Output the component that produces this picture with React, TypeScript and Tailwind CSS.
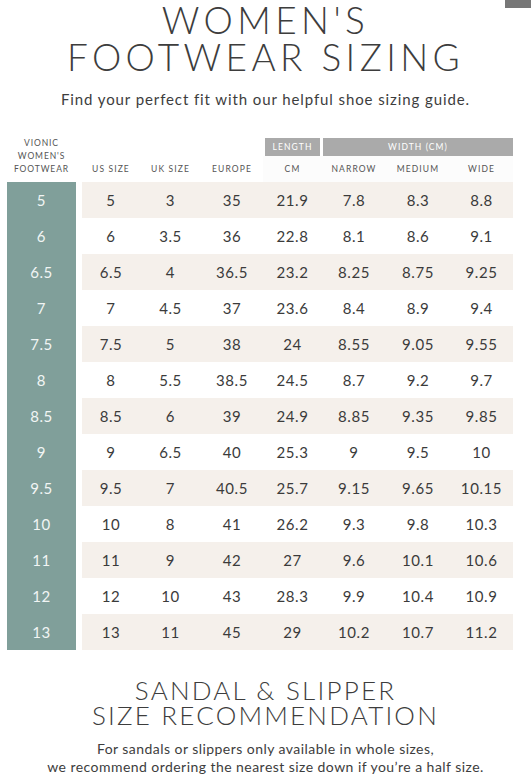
const rows = [
  ["5", "5", "3", "35", "21.9", "7.8", "8.3", "8.8"],
  ["6", "6", "3.5", "36", "22.8", "8.1", "8.6", "9.1"],
  ["6.5", "6.5", "4", "36.5", "23.2", "8.25", "8.75", "9.25"],
  ["7", "7", "4.5", "37", "23.6", "8.4", "8.9", "9.4"],
  ["7.5", "7.5", "5", "38", "24", "8.55", "9.05", "9.55"],
  ["8", "8", "5.5", "38.5", "24.5", "8.7", "9.2", "9.7"],
  ["8.5", "8.5", "6", "39", "24.9", "8.85", "9.35", "9.85"],
  ["9", "9", "6.5", "40", "25.3", "9", "9.5", "10"],
  ["9.5", "9.5", "7", "40.5", "25.7", "9.15", "9.65", "10.15"],
  ["10", "10", "8", "41", "26.2", "9.3", "9.8", "10.3"],
  ["11", "11", "9", "42", "27", "9.6", "10.1", "10.6"],
  ["12", "12", "10", "43", "28.3", "9.9", "10.4", "10.9"],
  ["13", "13", "11", "45", "29", "10.2", "10.7", "11.2"],
];

const widths = ["w-[58px]", "w-[61px]", "w-[62px]", "w-[59px]", "w-[64px]", "w-[64px]", "w-[63px]"];
const labels = ["US SIZE", "UK SIZE", "EUROPE", "CM", "NARROW", "MEDIUM", "WIDE"];

export default function App() {
  return (
    <div className="relative w-[531px] h-[780px] overflow-hidden bg-white text-[#3b3b3b] font-['Lato',sans-serif]">
      {/* stray scrollbar-ish block in the corner */}
      <div className="absolute right-0 top-0 w-[26px] h-[8px] bg-[#777]" />

      {/* ── Title ── */}
      <h1 className="pt-[1px] text-center text-[37px] leading-[37px] font-light tracking-[4.4px] text-[#3d3d3d]">
        WOMEN'S
        <br />
        FOOTWEAR SIZING
      </h1>
      <p className="mt-[15px] text-center text-[15px] leading-[18px] tracking-[0.9px] text-[#3d3d3d]">
        Find your perfect fit with our helpful shoe sizing guide.
      </p>

      {/* ── Table ── */}
      <div className="mt-[30px] pl-[7px]">
        {/* header */}
        <div className="flex h-[44px]">
          <div className="w-[69px] flex flex-col items-center justify-end pb-[6px] text-[8.5px] leading-[13px] tracking-[0.9px] text-[#555]">
            <span>VIONIC</span>
            <span>WOMEN'S</span>
            <span>FOOTWEAR</span>
          </div>
          <div className="w-[6px]" />
          <div className="flex flex-col">
            <div className="flex h-[18px]">
              <div className="w-[181px]" />
              <div className="w-[59px] px-[2px]">
                <div className="h-full bg-[#aaa] text-white text-[8.5px] tracking-[1.1px] flex items-center justify-center">
                  LENGTH
                </div>
              </div>
              <div className="w-[191px] pl-[1px]">
                <div className="h-full bg-[#aaa] text-white text-[8.5px] tracking-[1.1px] flex items-center justify-center">
                  WIDTH (CM)
                </div>
              </div>
            </div>
            <div className="flex h-[26px]">
              {labels.map((l, i) => (
                <div
                  key={l}
                  className={`${widths[i]} flex items-center justify-center text-[8.5px] tracking-[1.1px] text-[#555] ${i >= 3 ? "bg-[#fcfcfc]" : ""}`}
                >
                  {l}
                </div>
              ))}
            </div>
          </div>
        </div>

        {/* body */}
        {rows.map((r, ri) => (
          <div key={ri} className="flex h-[36px] text-[15px] tracking-[0.6px]">
            <div className="w-[69px] bg-[#809f9a] text-[#f1f5f4] flex items-center justify-center">
              {r[0]}
            </div>
            <div className="w-[6px]" />
            <div className={`flex ${ri % 2 === 0 ? "bg-[#f5f0eb]" : "bg-white"}`}>
              {r.slice(1).map((v, ci) => (
                <div key={ci} className={`${widths[ci]} flex items-center justify-center`}>
                  {v}
                </div>
              ))}
            </div>
          </div>
        ))}
      </div>

      {/* ── Sandal & slipper ── */}
      <h2 className="mt-[28px] text-center text-[26px] leading-[25px] font-light tracking-[2.2px] text-[#3d3d3d]">
        SANDAL &amp; SLIPPER
        <br />
        SIZE RECOMMENDATION
      </h2>
      <p className="mt-[12px] text-center text-[14px] leading-[18px] tracking-[0.45px] text-[#3d3d3d]">
        For sandals or slippers only available in whole sizes,
        <br />
        we recommend ordering the nearest size down if you’re a half size.
      </p>
    </div>
  );
}
